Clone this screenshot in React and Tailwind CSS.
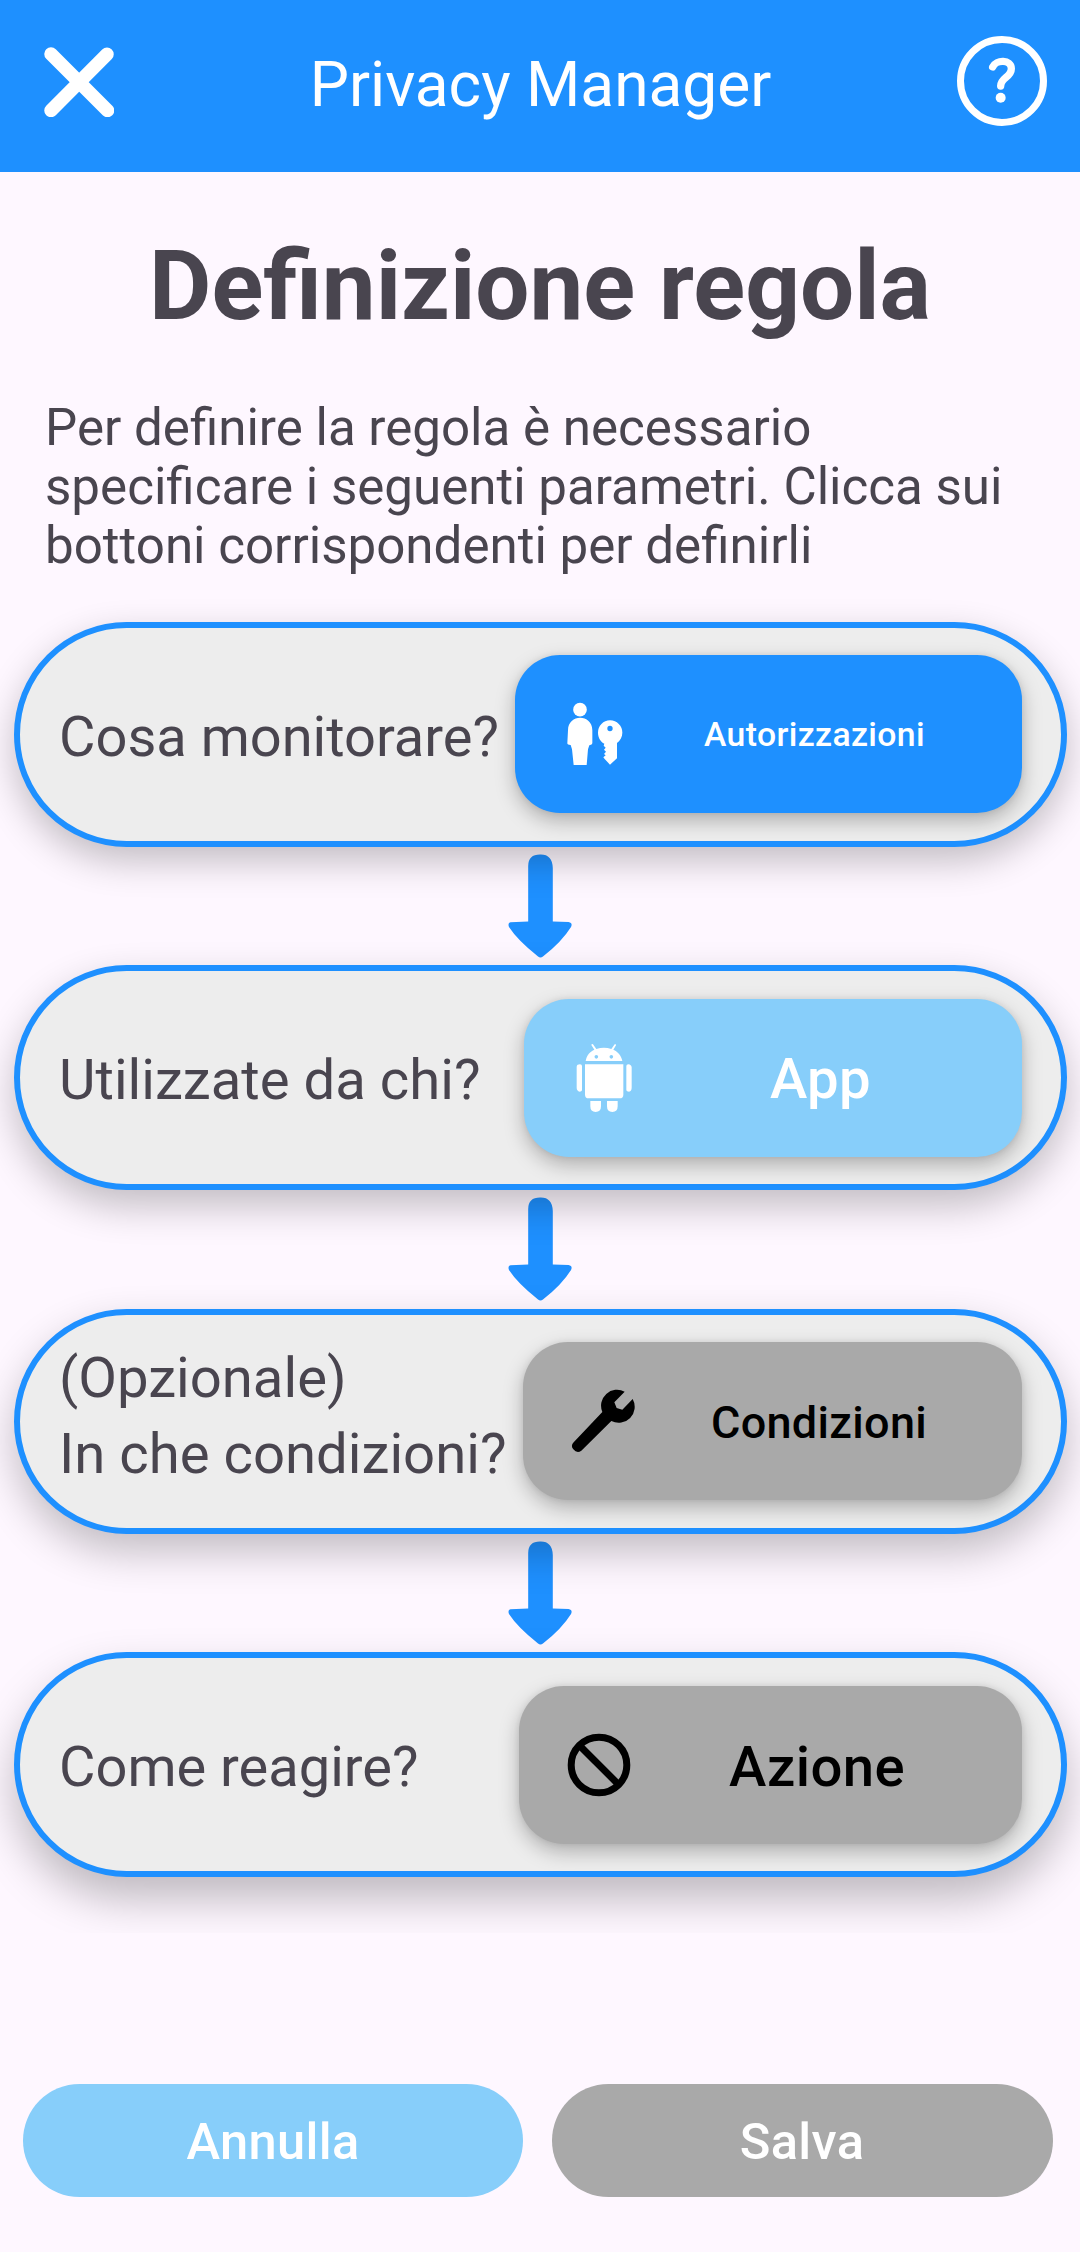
const buttonShadow = 'shadow-[0_8px_20px_rgba(0,0,0,0.26),0_0_6px_rgba(0,0,0,0.08)]';

function CloseIcon() {
  return (
    <svg className="h-[70px] w-[70px]" viewBox="0 0 70 70" stroke="#fff" strokeWidth="13.500" strokeLinecap="round">
      <path d="M7 7 63.500 63.500M63 7.200 7 63.500" />
    </svg>
  );
}

function HelpIcon() {
  return (
    <svg className="h-[90px] w-[90px]" viewBox="0 0 270 270" fill="none" stroke="#fff">
      <circle cx="135" cy="135" r="124.5" strokeWidth="21" />
      <path d="M107 93C117 70 163 70 163 98C163 124 131 124 131 150" strokeWidth="22" strokeLinecap="round" />
      <circle cx="131" cy="185" r="15" fill="#fff" stroke="none" />
    </svg>
  );
}

function PersonKeyIcon() {
  return (
    <svg className="h-[68px] w-[58px] shrink-0" viewBox="78 60 174 204" fill="#fff">
      <circle cx="120" cy="89" r="20.5" />
      <path d="M84 151C84 101 157 101 157 151V190Q157 195 148 196L144 208L140 255H101L96 208L92 195Q82 195 82 190Z" />
      <path
        fillRule="evenodd"
        d="M210 121A36.500 36.500 0 0 0 174 158C174 173 182 185 193 191L191 197L197 203L192 209L198 215L192 222L197 226L190 232L194 237L210 254L231 235V189C241 181 247 171 247 158A36.500 36.500 0 0 0 210 121ZM210 137.500A8 8 0 1 1 210 153.500A8 8 0 1 1 210 137.500Z"
      />
    </svg>
  );
}

function AndroidIcon() {
  return (
    <svg className="h-[70px] w-[57px] shrink-0" viewBox="45 36 171 210" fill="#fff">
      <path
        fillRule="evenodd"
        d="M77 90C80 72 91 61 103 56L94 42Q95 38 99 40L109 54Q132 47 154 54L164 40Q169 38 168 43L160 56C173 62 184 73 187 90ZM109 72A5.500 5.500 0 1 0 109 83A5.500 5.500 0 1 0 109 72ZM154 72A5.500 5.500 0 1 0 154 83A5.500 5.500 0 1 0 154 72Z"
      />
      <path d="M75 100H190V191Q190 202 179 202H86Q75 202 75 191Z" />
      <path d="M50 107Q51 100 60 100Q66 101 66 105V178Q65 182 59 182Q50 179 50 170ZM199 105Q199 101 205 100Q214 101 215 109V170Q215 180 207 182Q200 182 199 178Z" />
      <path d="M91 210H123V226Q123 243 107 243Q91 243 91 226ZM141 210H173V226Q173 243 157 243Q141 243 141 226Z" />
    </svg>
  );
}

function WrenchIcon() {
  return (
    <svg className="h-[66px] w-[66px] shrink-0" viewBox="30 24 198 198" fill="#000">
      <path d="M194 35A48 48 0 0 0 127 96L41 187Q31 197 40 208Q51 221 64 212L154 123A48 48 0 0 0 218 57L187 89L170 84L163 67Z" />
    </svg>
  );
}

function BanIcon() {
  return (
    <svg className="h-[64px] w-[64px] shrink-0" viewBox="0 0 64 64" fill="none" stroke="#000" strokeWidth="7">
      <circle cx="32" cy="32" r="27.800" />
      <path d="M12.500 12.500 51.500 51.500" />
    </svg>
  );
}

function Arrow() {
  return (
    <div className="flex h-[118.500px] justify-center pt-[7px]">
      <svg className="h-[104px] w-[64px]" viewBox="0.5 0 65 104" preserveAspectRatio="none" fill="#1e90ff">
        <path d="M21 12Q21 0.500 33 0.500Q45.500 0 46 14V67.500L62 68Q66.500 69 64.500 73Q55 88 36 102.500Q33.500 104.500 31 102.500Q10 86 1.500 73Q0 69 3 68.300L21 67.500Z" />
      </svg>
    </div>
  );
}

function Step({ label, labelClass, cardClass, buttonClass, textClass, icon, text }) {
  return (
    <section
      className={`relative z-10 mr-[13px] ml-[14px] flex h-[225px] items-center justify-between rounded-full border-[6px] border-[#1e90ff] bg-[#ededed] pr-[39px] pl-[39px] ${cardClass}`}
    >
      <div className={`whitespace-pre text-[#49454f] ${labelClass}`}>{label}</div>
      <button
        className={`flex h-[158px] shrink-0 items-center rounded-[45px] font-medium ${buttonShadow} ${buttonClass}`}
      >
        {icon}
        <span className={`flex-1 text-center ${textClass}`}>{text}</span>
      </button>
    </section>
  );
}

export default function App() {
  return (
    <div className="flex h-[2252px] w-[1080px] flex-col overflow-hidden bg-[#fef7ff] font-['Roboto',sans-serif]">
      <header className="flex h-[172px] shrink-0 justify-between bg-[#1e90ff] pr-[33px] pl-[44px]">
        <div className="pt-[47px]">
          <CloseIcon />
        </div>
        <h1 className="pt-[49px] pl-[10px] text-[62.200px] leading-[71px] text-white">Privacy Manager</h1>
        <div className="pt-[36px]">
          <HelpIcon />
        </div>
      </header>

      <main className="h-[1761px] shrink-0 overflow-hidden">
        <h2 className="pt-[58px] text-center text-[96px] leading-[113px] font-bold text-[#49454f]">
          Definizione regola
        </h2>
        <p className="mt-[55px] h-[223.600px] pl-[45px] text-[51.100px] leading-[59px] whitespace-pre text-[#49454f]">
          {'Per definire la regola è necessario\nspecificare i seguenti parametri. Clicca sui\nbottoni corrispondenti per definirli'}
        </p>

        <Step
          label="Cosa monitorare?"
          labelClass="pt-[6px] text-[56px] leading-[64px]"
          cardClass="shadow-[0_14px_36px_rgba(0,0,0,0.24)]"
          buttonClass="w-[507px] bg-[#1e90ff] pr-[17px] pl-[51px] text-white"
          textClass="pt-[3px] text-[33.750px] tracking-[0.011em]"
          icon={<PersonKeyIcon />}
          text="Autorizzazioni"
        />
        <Arrow />
        <Step
          label="Utilizzate da chi?"
          labelClass="pt-[4px] text-[56.250px] leading-[64px]"
          cardClass="shadow-[0_16px_38px_rgba(0,0,0,0.24)]"
          buttonClass="w-[498px] bg-[#87cefa] pr-[13px] pl-[51px] text-white"
          textClass="pt-[4px] text-[56.250px] tracking-[0.007em]"
          icon={<AndroidIcon />}
          text="App"
        />
        <Arrow />
        <Step
          label={'(Opzionale)\nIn che condizioni?'}
          labelClass="pb-[10px] text-[56.250px] leading-[76px]"
          cardClass="shadow-[0_18px_42px_rgba(0,0,0,0.24)]"
          buttonClass="w-[499px] bg-[#a9a9a9] pr-[20px] pl-[47px] text-black"
          textClass="pt-[3px] text-[45px] tracking-[0.007em]"
          icon={<WrenchIcon />}
          text="Condizioni"
        />
        <Arrow />
        <Step
          label="Come reagire?"
          labelClass="pt-[4px] text-[56px] leading-[64px]"
          cardClass="shadow-[0_22px_44px_rgba(0,0,0,0.25)]"
          buttonClass="w-[503px] bg-[#a9a9a9] pr-[19px] pl-[48px] text-black"
          textClass="pt-[5px] text-[56.250px] tracking-[0.007em]"
          icon={<BanIcon />}
          text="Azione"
        />
      </main>

      <footer className="mt-[151px] flex h-[113px] gap-[29px] pr-[27px] pl-[23px] text-[50.625px] font-medium tracking-[0.007em] text-white">
        <button className="w-[500px] rounded-full bg-[#87cefa] pt-[3px]">Annulla</button>
        <button className="flex-1 rounded-full bg-[#a9a9a9] pt-[3px] pr-[1px]">Salva</button>
      </footer>
    </div>
  );
}
